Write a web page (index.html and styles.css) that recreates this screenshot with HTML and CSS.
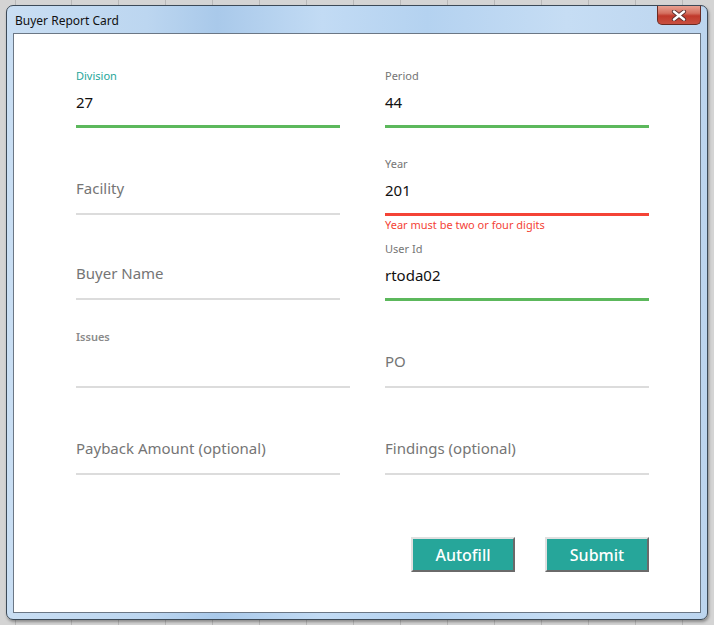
FILE: index.html
```html
<!DOCTYPE html>
<html>
<head>
<meta charset="utf-8">
<title>Buyer Report Card</title>
<link rel="stylesheet" href="styles.css">
</head>
<body>
<div class="window">
  <div class="titlebar">
    <span class="title">Buyer Report Card</span>
    <div class="close"><svg width="16" height="11" viewBox="0 0 16 11"><path d="M3 1.5 L13 9.5 M13 1.5 L3 9.5" stroke="#5a3030" stroke-width="4.2" stroke-linecap="round"/><path d="M3 1.5 L13 9.5 M13 1.5 L3 9.5" stroke="#fff" stroke-width="2.4" stroke-linecap="round"/></svg></div>
  </div>
  <div class="content">
    <div class="form">
      <div class="field focused">
        <div class="label">Division</div>
        <div class="value">27</div>
        <div class="line ok"></div>
      </div>
      <div class="field">
        <div class="label">Period</div>
        <div class="value">44</div>
        <div class="line ok"></div>
      </div>
      <div class="field">
        <div class="value placeholder">Facility</div>
        <div class="line"></div>
      </div>
      <div class="field">
        <div class="label">Year</div>
        <div class="value">201</div>
        <div class="line err"></div>
        <div class="error">Year must be two or four digits</div>
      </div>
      <div class="field">
        <div class="value placeholder">Buyer Name</div>
        <div class="line"></div>
      </div>
      <div class="field">
        <div class="label">User Id</div>
        <div class="value">rtoda02</div>
        <div class="line ok"></div>
      </div>
      <div class="field wide">
        <div class="label bold">Issues</div>
        <div class="value"></div>
        <div class="line"></div>
      </div>
      <div class="field">
        <div class="value placeholder">PO</div>
        <div class="line"></div>
      </div>
      <div class="field">
        <div class="value placeholder">Payback Amount (optional)</div>
        <div class="line"></div>
      </div>
      <div class="field">
        <div class="value placeholder">Findings (optional)</div>
        <div class="line"></div>
      </div>
    </div>
    <div class="actions">
      <button class="btn">Autofill</button>
      <button class="btn">Submit</button>
    </div>
  </div>
</div>
</body>
</html>
```
FILE: styles.css
```css
html, body {
  margin: 0;
  height: 100%;
}
body {
  box-sizing: border-box;
  padding: 5px 6px 5px 6px;
  background-color: #d4d4d4;
  background-image: repeating-linear-gradient(90deg, transparent 0 46px, #b8b8b8 46px 47px);
  background-position: 25px 0;
  font-family: "Noto Sans", "Open Sans", sans-serif;
}
.window {
  height: 615px;
  box-sizing: border-box;
  border: 1px solid #3c4a58;
  border-radius: 7px;
  background: linear-gradient(90deg, #c9def3 0%, #bcd6f0 20%, #a9c9ea 30%, #c2dbf4 45%, #b4d2f0 60%, #c6ddf4 80%, #bcd5ef 100%);
  padding: 0 6px 6px 6px;
  display: flex;
  flex-direction: column;
  box-shadow: 1px 2px 3px rgba(0,0,0,0.35);
}
.titlebar {
  height: 27px;
  display: flex;
  align-items: center;
  justify-content: space-between;
}
.title {
  font-size: 12px;
  color: #111;
  padding-left: 2px;
  padding-top: 2px;
}
.close {
  width: 44px;
  height: 19px;
  margin-top: -8px;
  box-sizing: border-box;
  border: 1px solid #6a2a22;
  border-top: none;
  border-radius: 0 0 5px 5px;
  background: linear-gradient(180deg, #e8a090 0%, #d47060 40%, #c0392b 55%, #c85040 100%);
  display: flex;
  align-items: center;
  justify-content: center;
}
.content {
  flex: 1;
  background: #fff;
  border: 1px solid #6b7785;
  padding: 34px 0 0 62px;
}
.form {
  display: grid;
  grid-template-columns: 264px 264px;
  column-gap: 45px;
  grid-template-rows: 60px 88px 85px 88px 87px;
}
.field {
  align-self: end;
  position: relative;
  display: flex;
  flex-direction: column;
}
.field.wide {
  width: 274px;
}
.label {
  font-size: 11px;
  line-height: 16px;
  color: #757575;
  margin-bottom: 6px;
}
.label.bold {
  font-weight: 600;
  color: #8a8a8a;
}
.focused .label {
  color: #26a69a;
}
.value {
  font-size: 15px;
  line-height: 24px;
  height: 24px;
  color: #111;
  margin-bottom: 11px;
}
.value.placeholder {
  color: #757575;
  margin-bottom: 13px;
}
.line {
  height: 3px;
  background: linear-gradient(180deg, #dcdcdc 0 2px, transparent 2px);
}
.line.ok {
  background: #5cb85c;
}
.line.err {
  background: #f44336;
}
.error {
  position: absolute;
  top: 100%;
  left: 0;
  margin-top: 2px;
  font-size: 11px;
  line-height: 14px;
  color: #f44336;
}
.actions {
  display: flex;
  gap: 30px;
  margin-top: 61px;
  padding-left: 335px;
}
.btn {
  width: 104px;
  height: 35px;
  box-sizing: border-box;
  background: #26a69a;
  color: #fff;
  font-family: "Noto Sans", "Open Sans", sans-serif;
  font-size: 16px;
  font-weight: 500;
  border: 2px solid;
  border-color: #e0e0e0 #6a6a6a #6a6a6a #e0e0e0;
  padding: 0;
}
```
